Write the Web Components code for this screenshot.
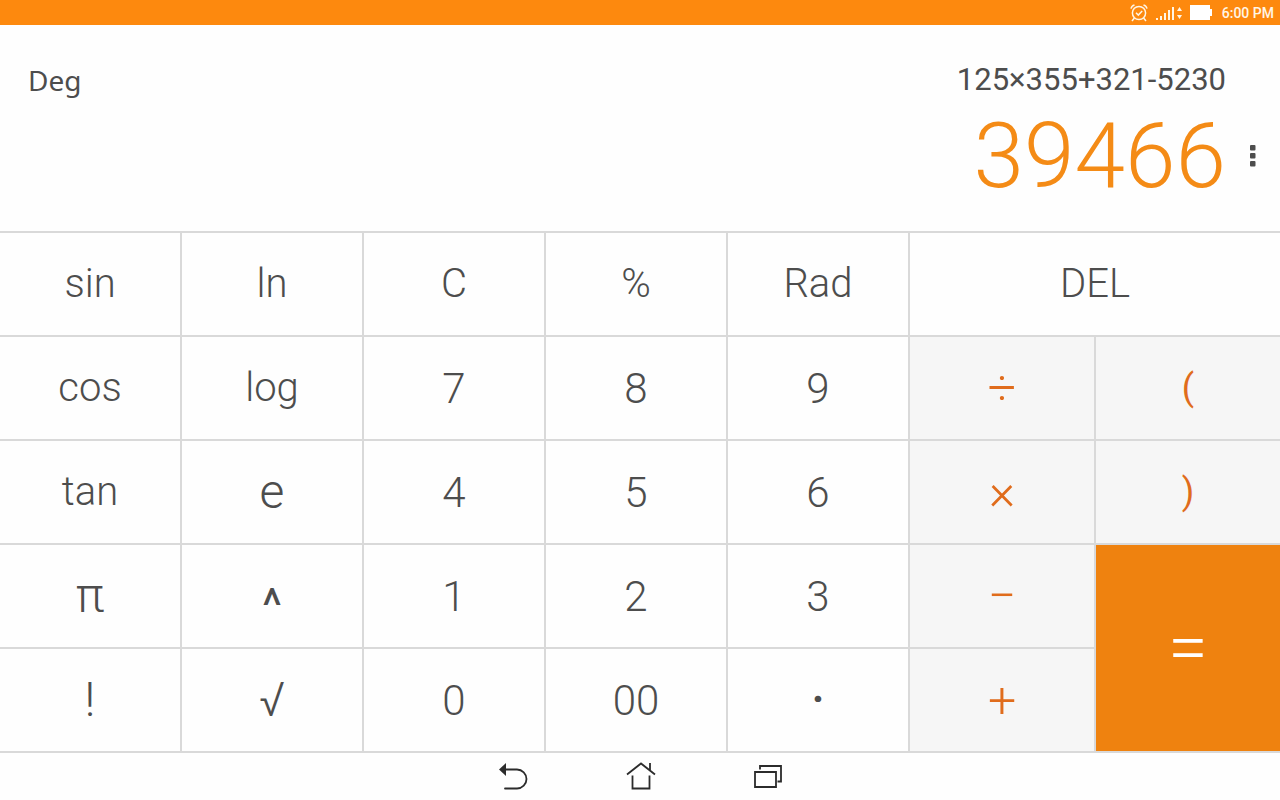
<!DOCTYPE html>
<html lang="en">
<head>
<meta charset="utf-8">
<meta name="viewport" content="width=device-width, initial-scale=1">
<title>Calculator</title>
<style>
  body {
    margin: 0;
    background: #fefefe;
    font-family: Roboto, "Noto Sans", sans-serif;
    color: #4d4d4d;
  }
</style>
</head>
<body>
<calc-app></calc-app>

<script>
/**
 * Android status bar: alarm, signal, battery and the clock.
 */
class StatusBar extends HTMLElement {
  constructor() {
    super();
    this.attachShadow({ mode: 'open' });
    this.shadowRoot.innerHTML = `
      <style>
        :host {
          display: flex;
          align-items: center;
          justify-content: flex-end;
          gap: 8px;
          height: 25px;
          padding-right: 6px;
          background: #fd890e;
          color: #fff5e6;
          font-size: 14px;
          font-weight: 500;
        }
        svg { display: block; }
      </style>
      <svg width="18" height="18" viewBox="0 0 18 18" fill="none" stroke="currentColor" stroke-width="1.5" aria-hidden="true">
        <circle cx="9" cy="9" r="6.6"/>
        <path d="M6 8.8l2.3 2.3L12.2 7M1 4.6C1.4 2.8 2.6 1.5 4.5 1M17 4.6C16.6 2.8 15.4 1.5 13.5 1M4.4 14l-2.4 3M13.6 14l2.4 3"/>
      </svg>
      <svg width="26" height="16" viewBox="0 0 26 16" fill="currentColor" aria-hidden="true">
        <path d="M0 13h2v2H0zM4 11h2v4H4zM8 8h2v7H8zM12 5h2v10h-2zM16 2h2v13h-2z"/>
        <path d="M21 6l2.500-4L26 6zM21 10l2.500 4 2.500-4z"/>
      </svg>
      <svg width="24" height="15" viewBox="0 0 24 15" fill="#fff" aria-hidden="true">
        <path d="M0 0h20v4h2v7h-2v4H0z"/>
      </svg>
      <slot></slot>
    `;
  }
}

/**
 * Display area: angle mode on the left, expression and result on the right.
 */
class CalcDisplay extends HTMLElement {
  constructor() {
    super();
    this.attachShadow({ mode: 'open' });
    this.shadowRoot.innerHTML = `
      <style>
        :host {
          display: flex;
          align-items: flex-start;
          justify-content: space-between;
          box-sizing: border-box;
          height: 206px;
          padding: 36px 15px 0 28px;
        }
        .mode {
          font: 28px/38px "Noto Sans", sans-serif;
        }
        .values {
          display: grid;
          grid-template-columns: auto 24px;
          column-gap: 15px;
          align-items: center;
          text-align: right;
        }
        .expression {
          grid-column: 1;
          font-size: 31px;
          line-height: 38px;
        }
        .result {
          grid-column: 1;
          font-size: 91px;
          font-weight: 300;
          line-height: 114px;
          color: #f48b16;
        }
        button {
          display: flex;
          justify-content: center;
          padding: 8px 0;
          border: 0;
          background: none;
          color: inherit;
          cursor: pointer;
        }
      </style>
      <div class="mode"><slot name="mode"></slot></div>
      <div class="values">
        <div class="expression"><slot name="expression"></slot></div>
        <div class="result"><slot name="result"></slot></div>
        <button aria-label="More options">
          <svg width="6" height="22" viewBox="0 0 6 22" fill="currentColor">
            <rect width="5.5" height="5.5" y="0" rx="1"/>
            <rect width="5.5" height="5.5" y="8" rx="1"/>
            <rect width="5.5" height="5.5" y="16" rx="1"/>
          </svg>
        </button>
      </div>
    `;
  }
}

/**
 * One key. The kind attribute picks its look:
 * function (default), digit, symbol, caret, point, operator, bracket, equals.
 */
class CalcKey extends HTMLElement {
  constructor() {
    super();
    this.attachShadow({ mode: 'open' });
    this.shadowRoot.innerHTML = `
      <style>
        :host { display: grid; }
        :host([wide]) { grid-column: span 2; }
        button {
          margin: 0;
          padding: 0;
          border: 0;
          background: #fefefe;
          color: #4d4d4d;
          font-family: inherit;
          font-size: 40px;
          font-weight: 300;
          line-height: 48px;
          cursor: pointer;
        }
        button:active { background: #ececec; }
        :host([kind="digit"]) button {
          padding-top: 2px;
          font-size: 42px;
        }
        :host([kind="symbol"]) button { font-size: 48px; }
        :host([kind="caret"]) button {
          padding-top: 20px;
          font-size: 48px;
          font-weight: 400;
        }
        :host([kind="point"]) button {
          font-size: 48px;
          font-weight: 500;
        }
        :host([kind="operator"]) button,
        :host([kind="bracket"]) button {
          background: #f6f6f6;
          color: #e06c1c;
          font-size: 50px;
        }
        :host([kind="bracket"]) button {
          font-size: 36px;
          font-weight: 400;
        }
        :host([kind="equals"]) { grid-row: span 2; }
        :host([kind="equals"]) button {
          background: #ef820f;
          color: #fff;
          font-size: 72px;
        }
      </style>
      <button><slot></slot></button>
    `;
  }
}

class CalcKeypad extends HTMLElement {
  constructor() {
    super();
    this.attachShadow({ mode: 'open' });
    this.shadowRoot.innerHTML = `
      <style>
        :host {
          flex: 1;
          display: grid;
          grid-template-columns: repeat(5, 180fr) repeat(2, 184fr);
          grid-template-rows: repeat(5, 1fr);
          gap: 2px;
          border: solid #d9d9d9;
          border-width: 2px 0;
          background: #d9d9d9;
        }
      </style>
      <slot></slot>
    `;
  }
}

/**
 * System navigation: back, home and recent apps.
 */
class NavBar extends HTMLElement {
  constructor() {
    super();
    this.attachShadow({ mode: 'open' });
    this.shadowRoot.innerHTML = `
      <style>
        :host {
          display: flex;
          justify-content: center;
          align-items: center;
          height: 47px;
          padding-left: 2px;
        }
        button {
          display: flex;
          justify-content: center;
          width: 127px;
          padding: 8px 0;
          border: 0;
          background: none;
          color: #2b2b2b;
          cursor: pointer;
        }
        svg { fill: none; stroke: currentColor; stroke-width: 1.8; }
      </style>
      <button aria-label="Back">
        <svg width="30" height="30" viewBox="0 0 30 30">
          <path d="M7 7.500h11a9.500 9.500 0 0 1 0 19H6" stroke-linecap="round"/>
          <path d="M0 7.500L7 1v13z" fill="currentColor" stroke="none"/>
        </svg>
      </button>
      <button aria-label="Home">
        <svg width="30" height="30" viewBox="0 0 30 30">
          <path d="M1 12.500L15 1.500l14 11M24 8.500V1M6.500 13.500v13h17v-13"/>
        </svg>
      </button>
      <button aria-label="Recent apps">
        <svg width="30" height="30" viewBox="0 0 30 30">
          <path d="M2 10h21v15H2zM7 7.500V4h21v15.500h-3.500"/>
        </svg>
      </button>
    `;
  }
}

class CalcApp extends HTMLElement {
  constructor() {
    super();
    this.attachShadow({ mode: 'open' });
  }

  connectedCallback() {
    this.render();
  }

  render() {
    const keys = [
      ['sin'], ['ln'], ['C'], ['%'], ['Rad'], ['DEL', '', 'wide'],
      ['cos'], ['log'], ['7', 'digit'], ['8', 'digit'], ['9', 'digit'], ['÷', 'operator'], ['(', 'bracket'],
      ['tan'], ['e', 'symbol'], ['4', 'digit'], ['5', 'digit'], ['6', 'digit'], ['×', 'operator'], [')', 'bracket'],
      ['π', 'symbol'], ['^', 'caret'], ['1', 'digit'], ['2', 'digit'], ['3', 'digit'], ['−', 'operator'], ['=', 'equals'],
      ['!', 'symbol'], ['√', 'symbol'], ['0', 'digit'], ['00', 'digit'], ['·', 'point'], ['+', 'operator']
    ];

    this.shadowRoot.innerHTML = `
      <style>
        :host {
          display: flex;
          flex-direction: column;
          min-height: 100vh;
        }
      </style>
      <status-bar>6:00 PM</status-bar>
      <calc-display>
        <span slot="mode">Deg</span>
        <span slot="expression">125×355+321-5230</span>
        <span slot="result">39466</span>
      </calc-display>
      <calc-keypad>
        ${keys.map(([label, kind = '', extra = '']) =>
          `<calc-key kind="${kind}" ${extra}>${label}</calc-key>`).join('')}
      </calc-keypad>
      <nav-bar></nav-bar>
    `;
  }
}

customElements.define('status-bar', StatusBar);
customElements.define('calc-display', CalcDisplay);
customElements.define('calc-key', CalcKey);
customElements.define('calc-keypad', CalcKeypad);
customElements.define('nav-bar', NavBar);
customElements.define('calc-app', CalcApp);
</script>
</body>
</html>
